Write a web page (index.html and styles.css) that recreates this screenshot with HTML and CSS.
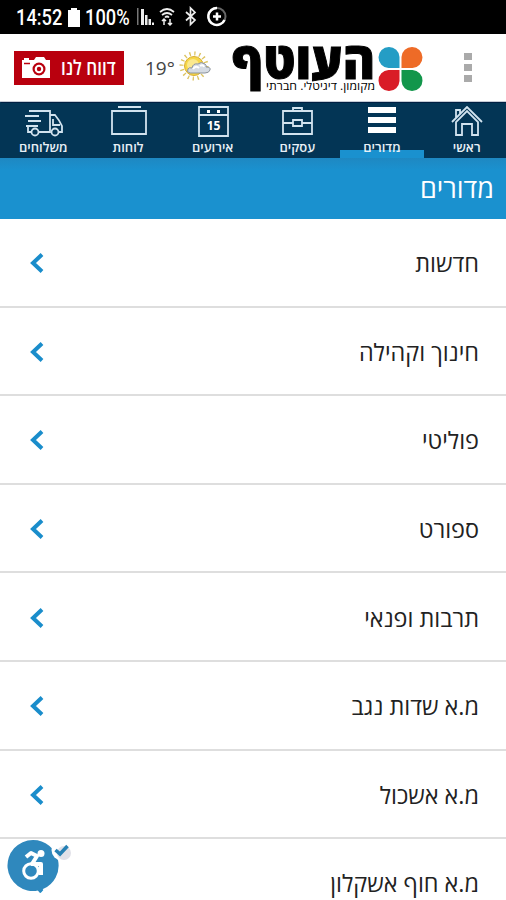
FILE: index.html
```html
<!DOCTYPE html>
<html lang="he" dir="rtl">

<head>
    <meta charset="UTF-8">
    <meta name="viewport" content="width=device-width, initial-scale=1.0">
    <title>העוטף - מדורים</title>
    <link rel="stylesheet" href="styles.css">
</head>

<body>
    <div class="status">
        <span class="time">14:52</span>
        <svg class="battery" width="12" height="19" viewBox="0 0 12 19">
            <path d="M3 0h6v2h3v17H0V2h3z" fill="#fff" />
        </svg>
        <span class="percent">100%</span>
        <svg width="92" height="22" viewBox="0 0 92 22">
            <g fill="#eee">
                <path d="M0 2h1.500v17H0z" fill="#777" />
                <path d="M4 3h3v16H4zM8 9h2.500v10H8zM11.500 13h2.500v6h-2.500zM15 16.500h2v2.500h-2z" />
            </g>
            <g fill="none" stroke="#eee" stroke-width="1.700">
                <path d="M23 6q7-6 14 0M25 9q5-4 10 0M28 11.500q2-2 4 0" />
                <path d="M27 13v6M33 13v6M25 15l2-2 2 2M31 17l2 2 2-2" stroke-width="1.500" />
                <path d="M49 6l9 8-4.500 4.500V2L58 6.500l-9 8" />
                <circle cx="80" cy="10.500" r="8.500" stroke="#666" stroke-width="2" />
                <path d="M80 2a8.500 8.500 0 1 0 7.500 12" stroke="#fff" stroke-width="2.500" />
                <path d="M80 6.500v8M76 10.500h8" stroke="#fff" stroke-width="2.500" />
            </g>
        </svg>
    </div>

    <div class="header">
        <div class="report">
            <svg width="29" height="22" viewBox="0 0 29 22">
                <path d="M3 1h5v2h5l2-3h8l2 3h4v18H1V3h2z" fill="#fff" />
                <path d="M3 6.500h6" stroke="#b9000e" stroke-width="1.500" />
                <circle cx="18" cy="12" r="6.500" fill="#b9000e" />
                <circle cx="18" cy="12" r="4.300" fill="#fff" />
                <circle cx="18" cy="12" r="2.200" fill="#b9000e" />
            </svg>
            <span>דווח לנו</span>
        </div>
        <span class="temp">19°</span>
        <svg class="weather" width="34" height="32" viewBox="0 0 34 32">
            <circle cx="15" cy="15" r="12.500" fill="none" stroke="#dcc35f" stroke-width="4" stroke-dasharray="1.300 3.600" />
            <circle cx="15" cy="15" r="9.500" fill="#f6d748" stroke="#d9ae30" />
            <circle cx="14" cy="14" r="6" fill="#fbe98e" />
            <path d="M11 22q-4-1-2-4 1-2 4-1 1-5 6-4 3-3 7 0 2 2 1 3 5 0 4 3-1 3-5 3z" fill="#d5dbe3" stroke="#8d949d" />
            <path d="M14 18q3-4 6-1M21 15q3-2 4 1" fill="none" stroke="#fff" stroke-width="2" />
        </svg>
        <svg class="logo" width="192" height="60" viewBox="0 0 192 60">
            <text class="logo-name" id="logoName">העוטף</text>
            <text class="logo-sub" id="logoSub">מקומון. דיגיטלי. חברתי</text>
            <path d="M167.500 30h-11a10.500 10.500 0 1 1 11-11z" fill="#249dc5" />
            <path d="M169.500 30h11a10.500 10.500 0 1 0-11-11z" fill="#ee6b27" />
            <path d="M167.500 32v11a10.500 10.500 0 1 1-11-11z" fill="#d91c27" />
            <path d="M169.500 32v11a10.500 10.500 0 1 0 11-11z" fill="#12964b" />
        </svg>
        <div class="dots">
            <i></i>
            <i></i>
            <i></i>
        </div>
    </div>

    <div class="nav">
        <div class="tab">
            <svg width="34" height="32" viewBox="0 0 34 32">
                <path d="M2 16L17 1l15 15M6 12V4h4v4M6 16v13h6V18h10v11h6V16L17 5z" />
            </svg>
            <span>ראשי</span>
        </div>
        <div class="tab active">
            <svg width="34" height="32" viewBox="0 0 34 32">
                <path d="M3 1h28v6H3zM3 11h28v6H3zM3 21h28v6H3z" class="solid" />
            </svg>
            <span>מדורים</span>
        </div>
        <div class="tab">
            <svg width="34" height="32" viewBox="0 0 34 32">
                <path d="M3 5h29v23H3zM13 5V2h9v3M3 17h10M22 17h10M13 14h9v6h-9z" />
            </svg>
            <span>עסקים</span>
        </div>
        <div class="tab">
            <svg width="34" height="32" viewBox="0 0 34 32">
                <path d="M3 1h29v29H3zM3 9h29" />
                <path d="M11 4h3v3h-3zM21 4h3v3h-3z" class="solid" />
                <text x="17.500" y="24" direction="ltr">15</text>
            </svg>
            <span>אירועים</span>
        </div>
        <div class="tab">
            <svg width="38" height="32" viewBox="0 0 38 32">
                <path d="M3 5h34v23H3zM9 1h23" />
            </svg>
            <span>לוחות</span>
        </div>
        <div class="tab">
            <svg width="40" height="32" viewBox="0 0 40 32">
                <path d="M6 5h21v21H15M9 26H5v-5M2 10h14M5 15h13M3 20h12M27 9h5q5 6 7 11v6h-4M30 13v6h7" />
                <circle cx="12" cy="26" r="3.500" />
                <circle cx="32" cy="26" r="3.500" />
            </svg>
            <span>משלוחים</span>
        </div>
    </div>

    <h1>מדורים</h1>

    <div class="list" id="list"></div>

    <svg class="access" width="66" height="56" viewBox="0 0 66 56">
        <path d="M26 1a25.500 25.500 0 1 0 5 50.500l2 2.500 3-4A25.500 25.500 0 0 0 26 1z" fill="#2f88bd" />
        <circle cx="55" cy="11" r="10.500" fill="#fff" />
        <circle cx="57" cy="14" r="7" fill="#e1e1e8" />
        <path d="M48.500 11l4.500 4 7.500-8" fill="none" stroke="#2680b4" stroke-width="3.500" />
        <circle cx="34" cy="14.500" r="3.500" fill="#fff" />
        <g fill="none" stroke="#fff" stroke-width="4" stroke-linejoin="round">
            <path d="M19 18l5-4 6 3-5 8h9v11" />
            <circle cx="24" cy="32" r="7.300" stroke-width="3" />
        </g>
    </svg>

    <script>
        let list = document.getElementById('list')

        let sections = ['חדשות', 'חינוך וקהילה', 'פוליטי', 'ספורט', 'תרבות ופנאי', 'מ.א שדות נגב', 'מ.א אשכול', 'מ.א חוף אשקלון']

        list.innerHTML = sections.map((name) => {
            return `<div class="row">
                <span>${name}</span>
                <svg width="14" height="20" viewBox="0 0 14 20"><path d="M12 1.500L3 10l9 8.500" /></svg>
            </div>`
        }).join('')

        // stretch the logo lines to the width of the artwork
        function fit(id, width, y) {
            let el = document.getElementById(id)
            let scale = width / el.getComputedTextLength()
            el.setAttribute('transform', `translate(143 ${y}) scale(${scale} 1)`)
        }
        fit('logoName', 143, 41)
        fit('logoSub', 109, 52)
    </script>
</body>

</html>
```
FILE: styles.css
```css
* {
    box-sizing: border-box;
}

body {
    margin: 0;
    height: 900px;
    overflow: hidden;
    position: relative;
    background-color: white;
    font-family: "Open Sans", "Noto Sans", sans-serif;
}

.status {
    direction: ltr;
    display: flex;
    align-items: center;
    height: 34px;
    padding-left: 16px;
    background-color: black;
    color: white;
    font-family: Roboto, sans-serif;
    font-size: 22px;
}

.time,
.percent {
    display: block;
    width: 47px;
    white-space: nowrap;
    transform: scaleX(0.83);
    transform-origin: left;
    font-weight: 500;
}

.battery {
    margin: 0 5px;
}

.percent {
    width: 52px;
}

.header {
    direction: ltr;
    display: flex;
    align-items: center;
    height: 68px;
    padding-left: 14px;
    border-bottom: 1px solid #c5cbd5;
}

.report {
    direction: ltr;
    display: flex;
    align-items: center;
    justify-content: space-between;
    width: 110px;
    height: 34px;
    padding: 0 7px;
    background-color: #b9000e;
    color: white;
    font-size: 20px;
    font-weight: 600;
}

.report span {
    display: block;
    width: 56px;
    white-space: nowrap;
    transform: scaleX(0.85);
    transform-origin: left;
}

.temp {
    width: 34px;
    margin-left: 21px;
    color: #444;
    font-size: 19px;
}

.weather {
    margin-bottom: 2px;
}

.logo {
    margin-left: 19px;
}

.logo text {
    direction: rtl;
}

.logo-name {
    font-size: 51px;
    font-weight: 800;
    stroke: black;
    stroke-width: 1;
}

.logo-sub {
    font-size: 11px;
}

.dots {
    display: flex;
    flex-direction: column;
    gap: 4px;
    margin-left: 40px;
}

.dots i {
    width: 8px;
    height: 7px;
    background-color: #aaa;
}

.nav {
    display: flex;
    height: 56px;
    margin-right: -3px;
    margin-left: 1px;
    box-shadow: -1px 0 #033555;
    background-color: #033555;
    color: #e7eff5;
    border-top: 1px solid #001f42;
}

.tab {
    flex: 1;
    display: flex;
    flex-direction: column;
    align-items: center;
    padding-top: 3px;
    font-size: 13px;
    font-weight: 600;
    line-height: 17px;
}

.tab svg {
    fill: none;
    stroke: #d2e3ef;
    stroke-width: 1.8;
}

.tab span {
    margin-top: 1px;
}

.tab .solid {
    fill: white;
    stroke: none;
}

.tab text {
    fill: white;
    stroke: none;
    font-size: 12px;
    font-weight: 700;
    text-anchor: middle;
}

.active {
    background: linear-gradient(#033555 47px, #1a91cf 47px);
}

h1 {
    height: 61px;
    margin: 0;
    padding-right: 12px;
    background: linear-gradient(#1e88c2, #1a91cf 12px);
    color: white;
    font-size: 27px;
    font-weight: 400;
    line-height: 60px;
}

.row {
    display: flex;
    justify-content: space-between;
    align-items: center;
    height: 88.6px;
    padding: 2px 27px 0 30px;
    border-bottom: 2px solid #dedede;
    color: #222;
    font-size: 23.4px;
}

.row path {
    fill: none;
    stroke: #1a8dcb;
    stroke-width: 4;
}

.access {
    position: absolute;
    left: 7px;
    top: 839px;
}
```
